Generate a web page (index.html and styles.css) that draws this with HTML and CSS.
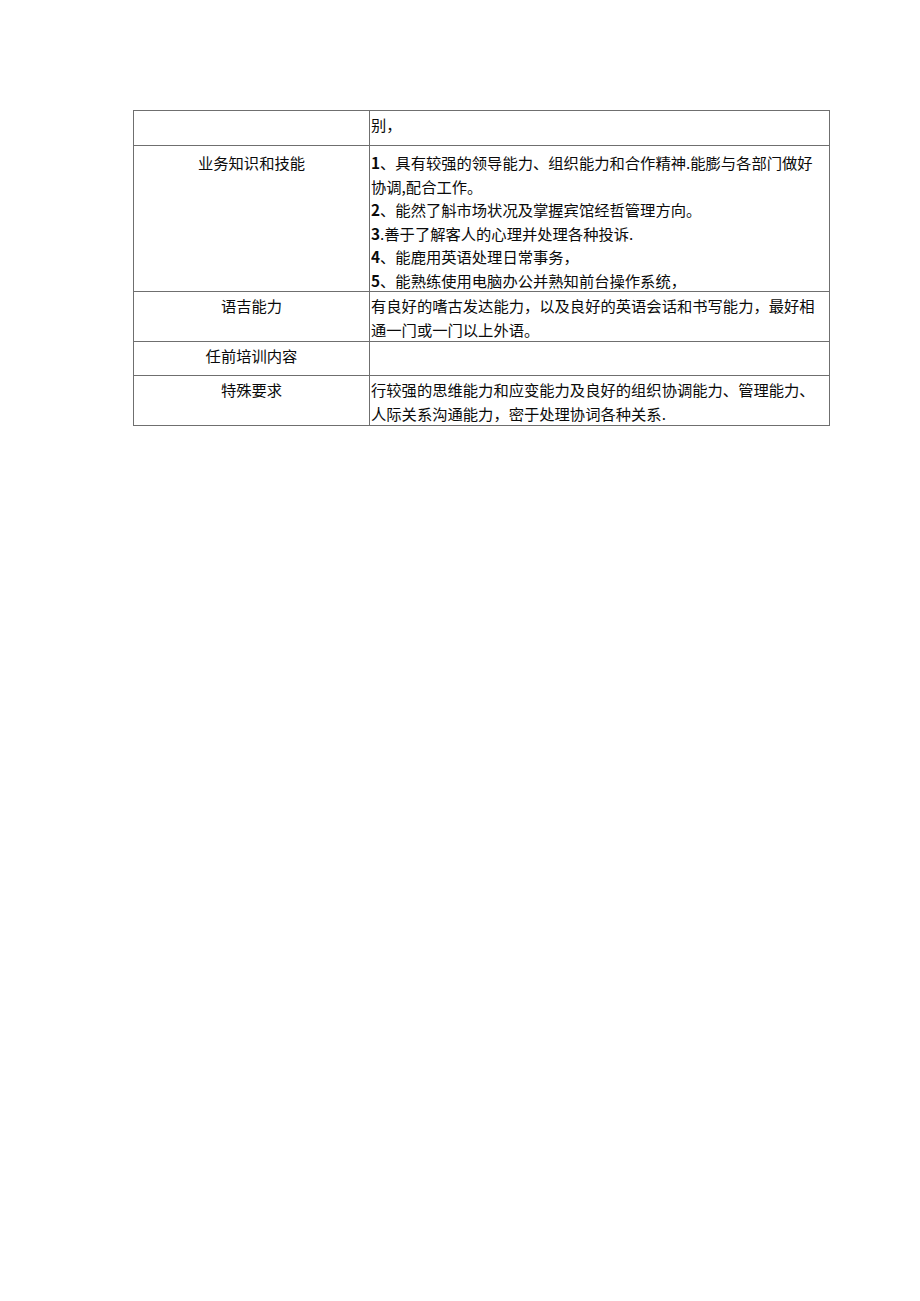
FILE: index.html
```html
<!DOCTYPE html>
<html lang="zh">
<head>
<meta charset="utf-8">
<link rel="stylesheet" href="styles.css">
</head>
<body>
<div class="page">
  <table class="req">
    <tr class="r-cont">
      <td class="label"></td>
      <td class="content">别，</td>
    </tr>
    <tr class="r-skill">
      <td class="label">业务知识和技能</td>
      <td class="content"><div class="clip"><span class="num">1</span>、具有较强的领导能力、组织能力和合作精神.能膨与各部门做好协调,配合工作。<br><span class="num">2</span>、能然了斛市场状况及掌握宾馆经哲管理方向。<br><span class="num">3</span>.善于了解客人的心理并处理各种投诉.<br><span class="num">4</span>、能鹿用英语处理日常事务，<br><span class="num">5</span>、能熟练使用电脑办公并熟知前台操作系统，</div></td>
    </tr>
    <tr class="r-lang">
      <td class="label">语吉能力</td>
      <td class="content">有良好的嗜古发达能力，以及良好的英语会话和书写能力，最好相通一门或一门以上外语。</td>
    </tr>
    <tr class="r-train">
      <td class="label">任前培训内容</td>
      <td class="content"></td>
    </tr>
    <tr class="r-special">
      <td class="label">特殊要求</td>
      <td class="content">行较强的思维能力和应变能力及良好的组织协调能力、管理能力、人际关系沟通能力，密于处理协词各种关系.</td>
    </tr>
  </table>
</div>
</body>
</html>
```

FILE: styles.css
```css
html, body {
  margin: 0;
  padding: 0;
  background: #ffffff;
}
.page {
  padding: 110px 0 0 133px;
}
.req {
  border-collapse: collapse;
  width: 697px;
  table-layout: fixed;
  font-family: "Noto Sans CJK SC", "Noto Sans", sans-serif;
  font-size: 15.3px;
  color: #0a0a0a;
  line-height: 23.5px;
}
.req td {
  border: 1px solid #6f6f6f;
  vertical-align: top;
  padding: 2px 0 0 0;
  box-sizing: border-box;
}
.req td.label {
  width: 236px;
  text-align: center;
}
.req td.content {
  text-align: left;
  padding-left: 1px;
  padding-right: 4px;
}
.req .num {
  font-weight: 700;
}
.r-cont td { height: 35px; }
.r-skill td { height: 146px; padding-top: 5px; }
.r-skill .clip { height: 140px; line-height: 23.6px; overflow: hidden; }
.r-lang td { height: 50px; }
.r-train td { height: 34px; }
.r-special td { height: 50px; }
```
